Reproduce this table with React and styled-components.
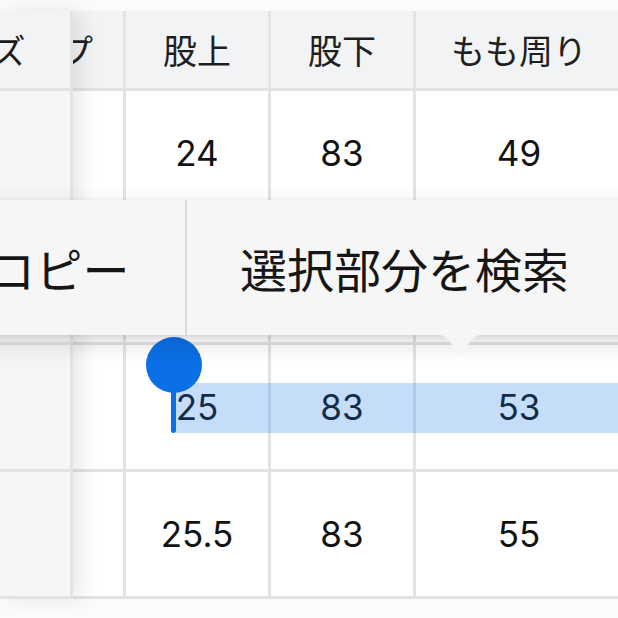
import React from "react";
import styled, { createGlobalStyle } from "styled-components";

const GlobalStyle = createGlobalStyle`
  html, body {
    margin: 0;
    background: #ffffff;
  }
  body {
    font-family: "Inter", "Noto Sans CJK JP", sans-serif;
    color: #1b1b1b;
  }
`;

const LINE = "#e2e3e5";
const HEAD_BG = "#f2f3f5";

const columns = [
  { key: "hip", label: "ヒップ", width: 162 },
  { key: "rise", label: "股上", width: 142 },
  { key: "inseam", label: "股下", width: 142 },
  { key: "thigh", label: "もも周り", width: 206 },
];

const rows = [
  { size: "S", hip: "92", rise: "24", inseam: "83", thigh: "49" },
  { size: "M", hip: "96", rise: "24.5", inseam: "83", thigh: "51" },
  { size: "L", hip: "100", rise: "25", inseam: "83", thigh: "53" },
  { size: "XL", hip: "104", rise: "25.5", inseam: "83", thigh: "55" },
];

const Page = styled.div`
  position: relative;
  width: 618px;
  height: 618px;
  overflow: hidden;
  padding-top: 11px;
  box-sizing: border-box;
  background: #fbfbfb;
`;

const Table = styled.div`
  display: flex;
  background: #fff;
`;

const StickyCol = styled.div`
  position: relative;
  z-index: 1;
  width: 70px;
  display: grid;
  grid-template-rows: 77px repeat(4, 124px);
  row-gap: 3px;
  background: ${LINE};
  border-right: 3px solid ${LINE};
  border-bottom: 3px solid ${LINE};
  box-shadow: 8px 0 18px rgba(0, 0, 0, 0.09);
`;

/* the column is scrolled: only the right part of each cell shows */
const StickyCell = styled.div`
  display: flex;
  align-items: center;
  overflow: hidden;
  white-space: nowrap;
  font-size: 34px;
  background: ${(p) => (p.$head ? HEAD_BG : "#f6f6f7")};
`;

const StickyLabel = styled.span`
  flex: none;
  width: 150px;
  margin-left: -100px;
  text-align: center;
`;

const ScrollArea = styled.div`
  flex: 1;
  overflow: hidden;
`;

const Grid = styled.div`
  margin-left: -112px;
  width: max-content;
  display: grid;
  grid-template-columns: ${(p) => p.$cols};
  grid-template-rows: 77px repeat(4, 124px);
  gap: 3px;
  background: ${LINE};
  border-bottom: 3px solid ${LINE};
`;

const Cell = styled.div`
  display: flex;
  align-items: center;
  justify-content: center;
  white-space: nowrap;
  background: ${(p) => (p.$head ? HEAD_BG : "#ffffff")};
  font-size: ${(p) => (p.$head ? "34px" : "35px")};
  color: ${(p) => (p.$head ? "#1f1f1f" : "#121212")};
`;

const Menu = styled.div`
  position: absolute;
  z-index: 5;
  top: 200px;
  left: -67px;
  right: -40px;
  height: 135px;
  display: flex;
  background: #f6f6f7;
  border-radius: 14px;
  box-shadow: 0 8px 26px rgba(0, 0, 0, 0.14), 0 1px 4px rgba(0, 0, 0, 0.08);
`;

const MenuItem = styled.div`
  display: flex;
  align-items: center;
  justify-content: ${(p) => (p.$fixed ? "center" : "flex-start")};
  width: ${(p) => (p.$fixed ? `${p.$fixed}px` : "auto")};
  flex: ${(p) => (p.$fixed ? "none" : "1")};
  padding: ${(p) => (p.$fixed ? "0" : "0 53px")};
  font-family: "Noto Sans CJK JP", sans-serif;
  font-size: 47px;
  color: #161616;
  white-space: nowrap;
`;

const Divider = styled.div`
  width: 2px;
  background: #dadadc;
`;

const Arrow = styled.svg`
  position: absolute;
  z-index: 5;
  left: 432px;
  top: 334px;
`;

const Highlight = styled.div`
  position: absolute;
  z-index: 3;
  left: 176px;
  right: 0;
  top: 383px;
  height: 50px;
  background: rgba(28, 118, 232, 0.25);
`;

const Knob = styled.div`
  position: absolute;
  z-index: 4;
  left: 146px;
  top: 337px;
  width: 56px;
  height: 56px;
  border-radius: 50%;
  background: #0b6fe6;
`;

const Stem = styled.div`
  position: absolute;
  z-index: 4;
  left: 171px;
  top: 380px;
  width: 5px;
  height: 53px;
  border-radius: 3px;
  background: #0b6fe6;
`;

export default function App() {
  const cols = columns.map((c) => `${c.width}px`).join(" ");
  return (
    <>
      <GlobalStyle />
      <Page>
        <Table>
          <StickyCol>
            <StickyCell $head>
              <StickyLabel>サイズ</StickyLabel>
            </StickyCell>
            {rows.map((r) => (
              <StickyCell key={r.size}>
                <StickyLabel>{r.size}</StickyLabel>
              </StickyCell>
            ))}
          </StickyCol>
          <ScrollArea>
            <Grid $cols={cols}>
              {columns.map((c) => (
                <Cell $head key={c.key}>
                  {c.label}
                </Cell>
              ))}
              {rows.map((r) =>
                columns.map((c) => <Cell key={r.size + c.key}>{r[c.key]}</Cell>)
              )}
            </Grid>
          </ScrollArea>
        </Table>

        <Highlight />
        <Stem />
        <Knob />

        <Menu>
          <MenuItem $fixed={252}>コピー</MenuItem>
          <Divider />
          <MenuItem>選択部分を検索</MenuItem>
        </Menu>
        <Arrow width="56" height="26" viewBox="0 0 56 26">
          <path
            d="M0 0 C13 0 18 5 23 17 Q28 27 33 17 C38 5 43 0 56 0 Z"
            fill="#f6f6f7"
          />
        </Arrow>
      </Page>
    </>
  );
}
